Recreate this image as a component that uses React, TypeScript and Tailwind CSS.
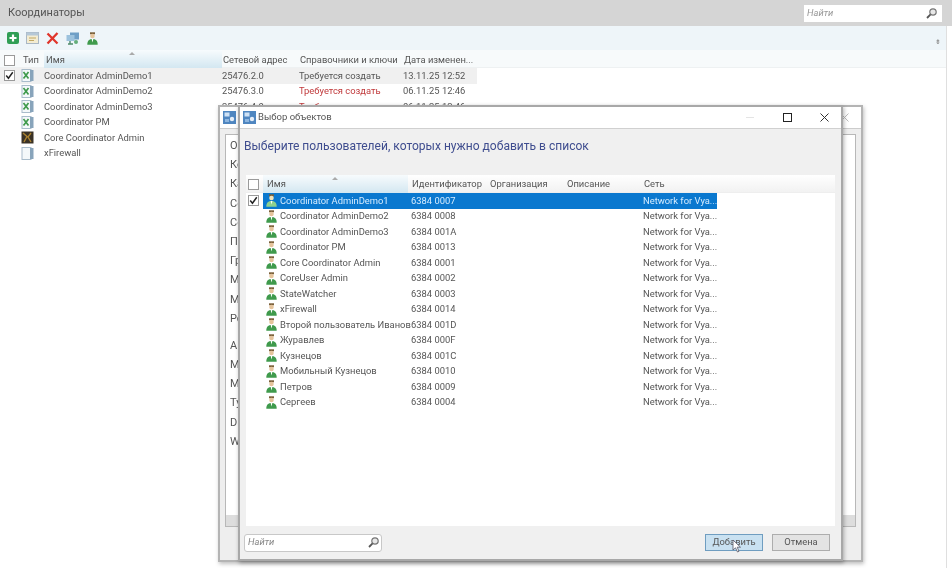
import React from "react";

const FONT = { fontFamily: 'Roboto, "Open Sans", sans-serif' };

function Check() {
  return (
    <svg width="11" height="11" viewBox="0 0 11 11" className="block">
      <path d="M1.5 5.5 L4.2 8.8 L9.5 1.5" fill="none" stroke="#222" strokeWidth="1.8" />
    </svg>
  );
}

function Box({ checked, size = 11 }: { checked?: boolean; size?: number }) {
  return (
    <div className="flex items-center justify-center border border-[#9a9a9a] bg-white" style={{ width: size, height: size }}>
      {checked ? <Check /> : null}
    </div>
  );
}

function Caret() {
  return <div className="absolute left-1/2 top-[2px] h-0 w-0 -translate-x-[4px] border-x-[3px] border-b-[3px] border-x-transparent border-b-[#aaa]" />;
}

function DocIcon({ kind }: { kind: "x" | "core" | "plain" }) {
  if (kind === "core") {
    return (
      <svg width="13" height="13" viewBox="0 0 13 13">
        <rect x="0.5" y="0.5" width="12" height="12" fill="#3a3226" />
        <path d="M2 2 L6 5.5 L3 11 M10 2 L7 6 L10 11" stroke="#a9812f" strokeWidth="1.4" fill="none" />
      </svg>
    );
  }
  return (
    <svg width="13" height="13" viewBox="0 0 13 13">
      <rect x="1" y="0.5" width="9" height="12" fill="#f4f8fa" stroke="#a9bccb" />
      <rect x="9" y="1" width="3.5" height="11" fill="#88a4bb" />
      {kind === "x" ? <path d="M2.5 3 L7.5 9.5 M7.5 3 L2.5 9.5" stroke="#3f9a4c" strokeWidth="1.7" /> : null}
    </svg>
  );
}

function UserIcon({ selected }: { selected?: boolean }) {
  return (
    <svg width="11" height="13" viewBox="0 0 11 13" className="shrink-0">
      <rect x="3" y="0.3" width="5" height="2" fill="#7a5f38" />
      <circle cx="5.5" cy="4" r="2.3" fill={selected ? "#f3e3b8" : "#e5c49c"} />
      <path d="M0.3 12.7 C0.3 8.5 2.5 7 5.5 7 C8.5 7 10.7 8.5 10.7 12.7 Z" fill={selected ? "#8ed08e" : "#3f9a4c"} />
      <path d="M4.6 7 L6.4 7 L5.5 10.5 Z" fill="#ffffff" />
    </svg>
  );
}

function WinIcon() {
  return (
    <svg width="13" height="13" viewBox="0 0 13 13" className="shrink-0">
      <rect width="13" height="13" fill="#4f86c0" />
      <rect x="1.5" y="1.5" width="5" height="4" fill="#cfe2f5" />
      <circle cx="9" cy="8" r="2.2" fill="#e6eef7" />
      <rect x="2" y="8" width="4" height="3" fill="#8db5df" />
    </svg>
  );
}

function Search() {
  return (
    <svg width="13" height="13" viewBox="0 0 13 13">
      <circle cx="8" cy="5" r="3.2" fill="#e8e8e8" stroke="#777" strokeWidth="1.2" />
      <path d="M5.6 7.4 L2 11" stroke="#555" strokeWidth="1.8" />
    </svg>
  );
}

function Toolbar() {
  return (
    <div className="flex h-6 items-center gap-[7px] bg-[#eef5f9] pl-[7px]">
      <svg width="12" height="12" viewBox="0 0 12 12">
        <rect width="12" height="12" rx="2" fill="#2f9e55" />
        <path d="M6 2.5 V9.5 M2.5 6 H9.5" stroke="#fff" strokeWidth="2.2" />
      </svg>
      <svg width="13" height="12" viewBox="0 0 13 12">
        <rect x="0.5" y="0.5" width="12" height="11" fill="#f3ecd2" stroke="#a9b7c4" />
        <rect x="0.5" y="0.5" width="12" height="3" fill="#b5c8d8" />
        <path d="M3 6 H10 M3 8.5 H8" stroke="#c2a862" strokeWidth="1" />
      </svg>
      <svg width="13" height="13" viewBox="0 0 13 13">
        <path d="M1.5 1.5 L11.5 11.5 M11.5 1 L1.5 11.5" stroke="#e0352b" strokeWidth="2.3" />
      </svg>
      <svg width="14" height="13" viewBox="0 0 14 13">
        <rect x="4" y="0.5" width="9" height="7" fill="#6f9fc6" />
        <rect x="0.5" y="3" width="8" height="6" fill="#9cc2dd" />
        <path d="M4 9 V12 M2 12 H7" stroke="#4f8a6a" strokeWidth="1.4" />
        <circle cx="10" cy="10" r="2" fill="#63ad7a" />
      </svg>
      <UserIcon />
    </div>
  );
}

const mainRows = [
  ["x", "Coordinator AdminDemo1", "25476.2.0", "Требуется создать", "13.11.25 12:52", false],
  ["x", "Coordinator AdminDemo2", "25476.3.0", "Требуется создать", "06.11.25 12:46", true],
  ["x", "Coordinator AdminDemo3", "25476.4.0", "Требуется создать", "06.11.25 12:46", true],
  ["x", "Coordinator PM", "", "", "", false],
  ["core", "Core Coordinator Admin", "", "", "", false],
  ["plain", "xFirewall", "", "", "", false],
] as const;

function MainTable() {
  const cols = "grid grid-cols-[19px_25px_178px_77px_104px_74px]";
  return (
    <div className="flex-1 text-[9.4px] text-[#555]">
      <div className={`${cols} h-[18px] items-center whitespace-nowrap border-b border-[#eef1f2] bg-[#f7fafb] pt-[2px]`}>
        <div className="pl-1">
          <Box />
        </div>
        <div className="pl-1">Тип</div>
        <div className="relative -mt-[2px] flex h-[18px] items-center bg-gradient-to-b from-[#f7fbfd] to-[#d3e7f1] pl-[2px] pt-[2px]">
          <Caret />
          Имя
        </div>
        <div className="pl-[1px]">Сетевой адрес</div>
        <div className="pl-[1px]">Справочники и ключи</div>
        <div className="pl-[1px]">Дата изменен...</div>
      </div>
      {mainRows.map((r, i) => (
        <div key={i} className={`${cols} h-[15.5px] w-[477px] items-center ${i === 0 ? "bg-[#f0f0f0]" : ""}`}>
          <div className="pl-1">{i === 0 ? <Box checked /> : null}</div>
          <div className="pl-[2px]">
            <DocIcon kind={r[0]} />
          </div>
          <div>{r[1]}</div>
          <div>{r[2]}</div>
          <div className={r[5] ? "text-[#c0393b]" : ""}>{r[3]}</div>
          <div>{r[4]}</div>
        </div>
      ))}
    </div>
  );
}

function WindowControls() {
  return (
    <div className="flex items-center">
      <div className="mr-[29px] h-px w-2 bg-[#e4e4e4]" />
      <div className="mr-[28px] h-[9px] w-[9px] border border-[#222]" />
      <svg width="9" height="9" viewBox="0 0 9 9">
        <path d="M0.5 0.5 L8.5 8.5 M8.5 0.5 L0.5 8.5" stroke="#333" strokeWidth="1" />
      </svg>
    </div>
  );
}

const backLabels = [
  ["О", 0], ["Ко", 0], ["Ка", 0], ["Се", 0], ["Се", 0], ["П", 0], ["Гр", 0], ["М", 0], ["М", 0], ["Ро", 0],
  ["А", 8], ["М", 0], ["М", 0], ["Ту", 0], ["D", 0], ["W", 0],
] as const;

function BackWindow() {
  return (
    <div className="absolute left-[218px] top-[105px] flex h-[457px] w-[645px] flex-col border-2 border-[#b4b4b4] bg-[#eeeeee] shadow-[1px_2px_4px_rgba(0,0,0,0.25)]">
      <div className="flex h-[22px] items-center justify-between border-b border-[#cccccc] bg-white pl-[3px] pr-3">
        <WinIcon />
        <svg width="9" height="9" viewBox="0 0 9 9">
          <path d="M0.5 0.5 L8.5 8.5 M8.5 0.5 L0.5 8.5" stroke="#bbb" />
        </svg>
      </div>
      <div className="m-[5px] mb-[33px] flex flex-1 flex-col border border-[#b8b8b8] bg-white pl-[4px] pt-[1px] text-[11px] text-[#555]">
        {backLabels.map(([t, extra], i) => (
          <div key={i} className="h-[19.2px] leading-[19px]" style={{ marginTop: extra }}>
            {t}
          </div>
        ))}
        <div className="-ml-[4px] mt-auto h-[11px] bg-[#dddddd]" />
      </div>
    </div>
  );
}

const users = [
  ["Coordinator AdminDemo1", "6384 0007"],
  ["Coordinator AdminDemo2", "6384 0008"],
  ["Coordinator AdminDemo3", "6384 001A"],
  ["Coordinator PM", "6384 0013"],
  ["Core Coordinator Admin", "6384 0001"],
  ["CoreUser Admin", "6384 0002"],
  ["StateWatcher", "6384 0003"],
  ["xFirewall", "6384 0014"],
  ["Второй пользователь Иванов", "6384 001D"],
  ["Журавлев", "6384 000F"],
  ["Кузнецов", "6384 001C"],
  ["Мобильный Кузнецов", "6384 0010"],
  ["Петров", "6384 0009"],
  ["Сергеев", "6384 0004"],
];

function FrontWindow() {
  const cols = "grid grid-cols-[17px_145px_79px_76px_77px_77px]";
  return (
    <div className="absolute left-[238px] top-[105px] flex h-[456px] w-[605px] flex-col border-2 border-[#a8a8a8] bg-[#f0f0f0] text-[#555] shadow-[1px_2px_4px_rgba(0,0,0,0.3)]">
      <div className="flex h-[22px] shrink-0 items-center justify-between border-b border-[#d0d0d0] bg-white pl-[3px] pr-[12px]">
        <div className="flex items-center gap-[2px] text-[9.5px]">
          <WinIcon />
          <span>Выбор объектов</span>
        </div>
        <WindowControls />
      </div>
      <div className="h-[46px] shrink-0 pl-[4px] pt-[7px] text-[12.05px] leading-[20px] text-[#3f4d8f]">
        Выберите пользователей, которых нужно добавить в список
      </div>
      <div className="mx-[6px] flex-1 bg-white text-[9.4px]">
        <div className={`${cols} h-[18px] items-center whitespace-nowrap border-b border-[#eeeeee] bg-gradient-to-b from-[#ffffff] to-[#f2f2f2] pt-[1px]`}>
          <div className="pl-[2px]">
            <Box />
          </div>
          <div className="relative -mt-[1px] flex h-[18px] items-center bg-gradient-to-b from-[#f7fbfd] to-[#d3e7f1] pl-[4px] pt-[1px]">
            <Caret />
            Имя
          </div>
          <div className="pl-[4px]">Идентификатор</div>
          <div className="pl-[3px]">Организация</div>
          <div className="pl-[4px]">Описание</div>
          <div className="pl-[4px]">Сеть</div>
        </div>
        {users.map((u, i) => (
          <div key={u[0]} className={`${cols} h-[15.5px] items-center`}>
            <div className="pl-[2px]">{i === 0 ? <Box checked /> : null}</div>
            <div className={`flex h-full items-center gap-[3px] whitespace-nowrap pl-[3px] ${i === 0 ? "bg-[#0a78cf] text-[#d5ecff]" : ""}`}>
              <UserIcon selected={i === 0} />
              <span>{u[0]}</span>
            </div>
            <div className={`flex h-full items-center pl-[3px] ${i === 0 ? "bg-[#0a78cf] text-[#d5ecff]" : ""}`}>{u[1]}</div>
            <div className={`h-full ${i === 0 ? "bg-[#0a78cf]" : ""}`} />
            <div className={`h-full ${i === 0 ? "bg-[#0a78cf]" : ""}`} />
            <div className={`flex h-full items-center whitespace-nowrap pl-[3px] ${i === 0 ? "bg-[#0a78cf] text-[#d5ecff]" : ""}`}>Network for Vya...</div>
          </div>
        ))}
      </div>
      <div className="flex h-[33px] shrink-0 items-center justify-between pl-[4px] pr-[11px] text-[9.4px]">
        <div className="flex h-[18px] w-[138px] items-center justify-between rounded-[3px] border border-[#c8c8c8] bg-white pl-[3px] pr-[1px] italic text-[#888]">
          <span>Найти</span>
          <Search />
        </div>
        <div className="flex gap-[9px]">
          <div className="relative flex h-[17px] w-[58px] items-center justify-center border border-[#6f9dc0] bg-[#c9e1f1]">
            Добавить
            <svg width="10" height="14" viewBox="0 0 10 14" className="absolute left-[26px] top-[4px]">
              <path d="M1 1 V11 L3.5 8.8 L5.5 13 L7 12.3 L5.2 8.2 H8.5 Z" fill="#fff" stroke="#556" strokeWidth="0.8" />
            </svg>
          </div>
          <div className="flex h-[17px] w-[58px] items-center justify-center border border-[#adadad] bg-[#e3e3e3]">Отмена</div>
        </div>
      </div>
    </div>
  );
}

export default function App() {
  return (
    <div className="relative h-[568px] w-[952px] overflow-hidden bg-white blur-[0.4px]" style={FONT}>
      <div className="flex h-full flex-col">
        <div className="flex h-[26px] shrink-0 items-center justify-between bg-[#d5d5d5] pl-2 pr-[10px]">
          <span className="text-[11px] text-[#555]">Координаторы</span>
          <div className="flex h-[17px] w-[138px] items-center justify-between bg-white pl-[3px] pr-[4px] text-[9.4px] italic text-[#999]">
            <span>Найти</span>
            <Search />
          </div>
        </div>
        <div className="mr-[5px] flex flex-1 flex-col border-r border-[#dfdfdf]">
          <div className="relative">
            <Toolbar />
            <span className="absolute right-[5px] top-[13px] text-[7px] leading-[7px] text-[#888]">⇟</span>
          </div>
          <MainTable />
        </div>
      </div>
      <BackWindow />
      <FrontWindow />
    </div>
  );
}
